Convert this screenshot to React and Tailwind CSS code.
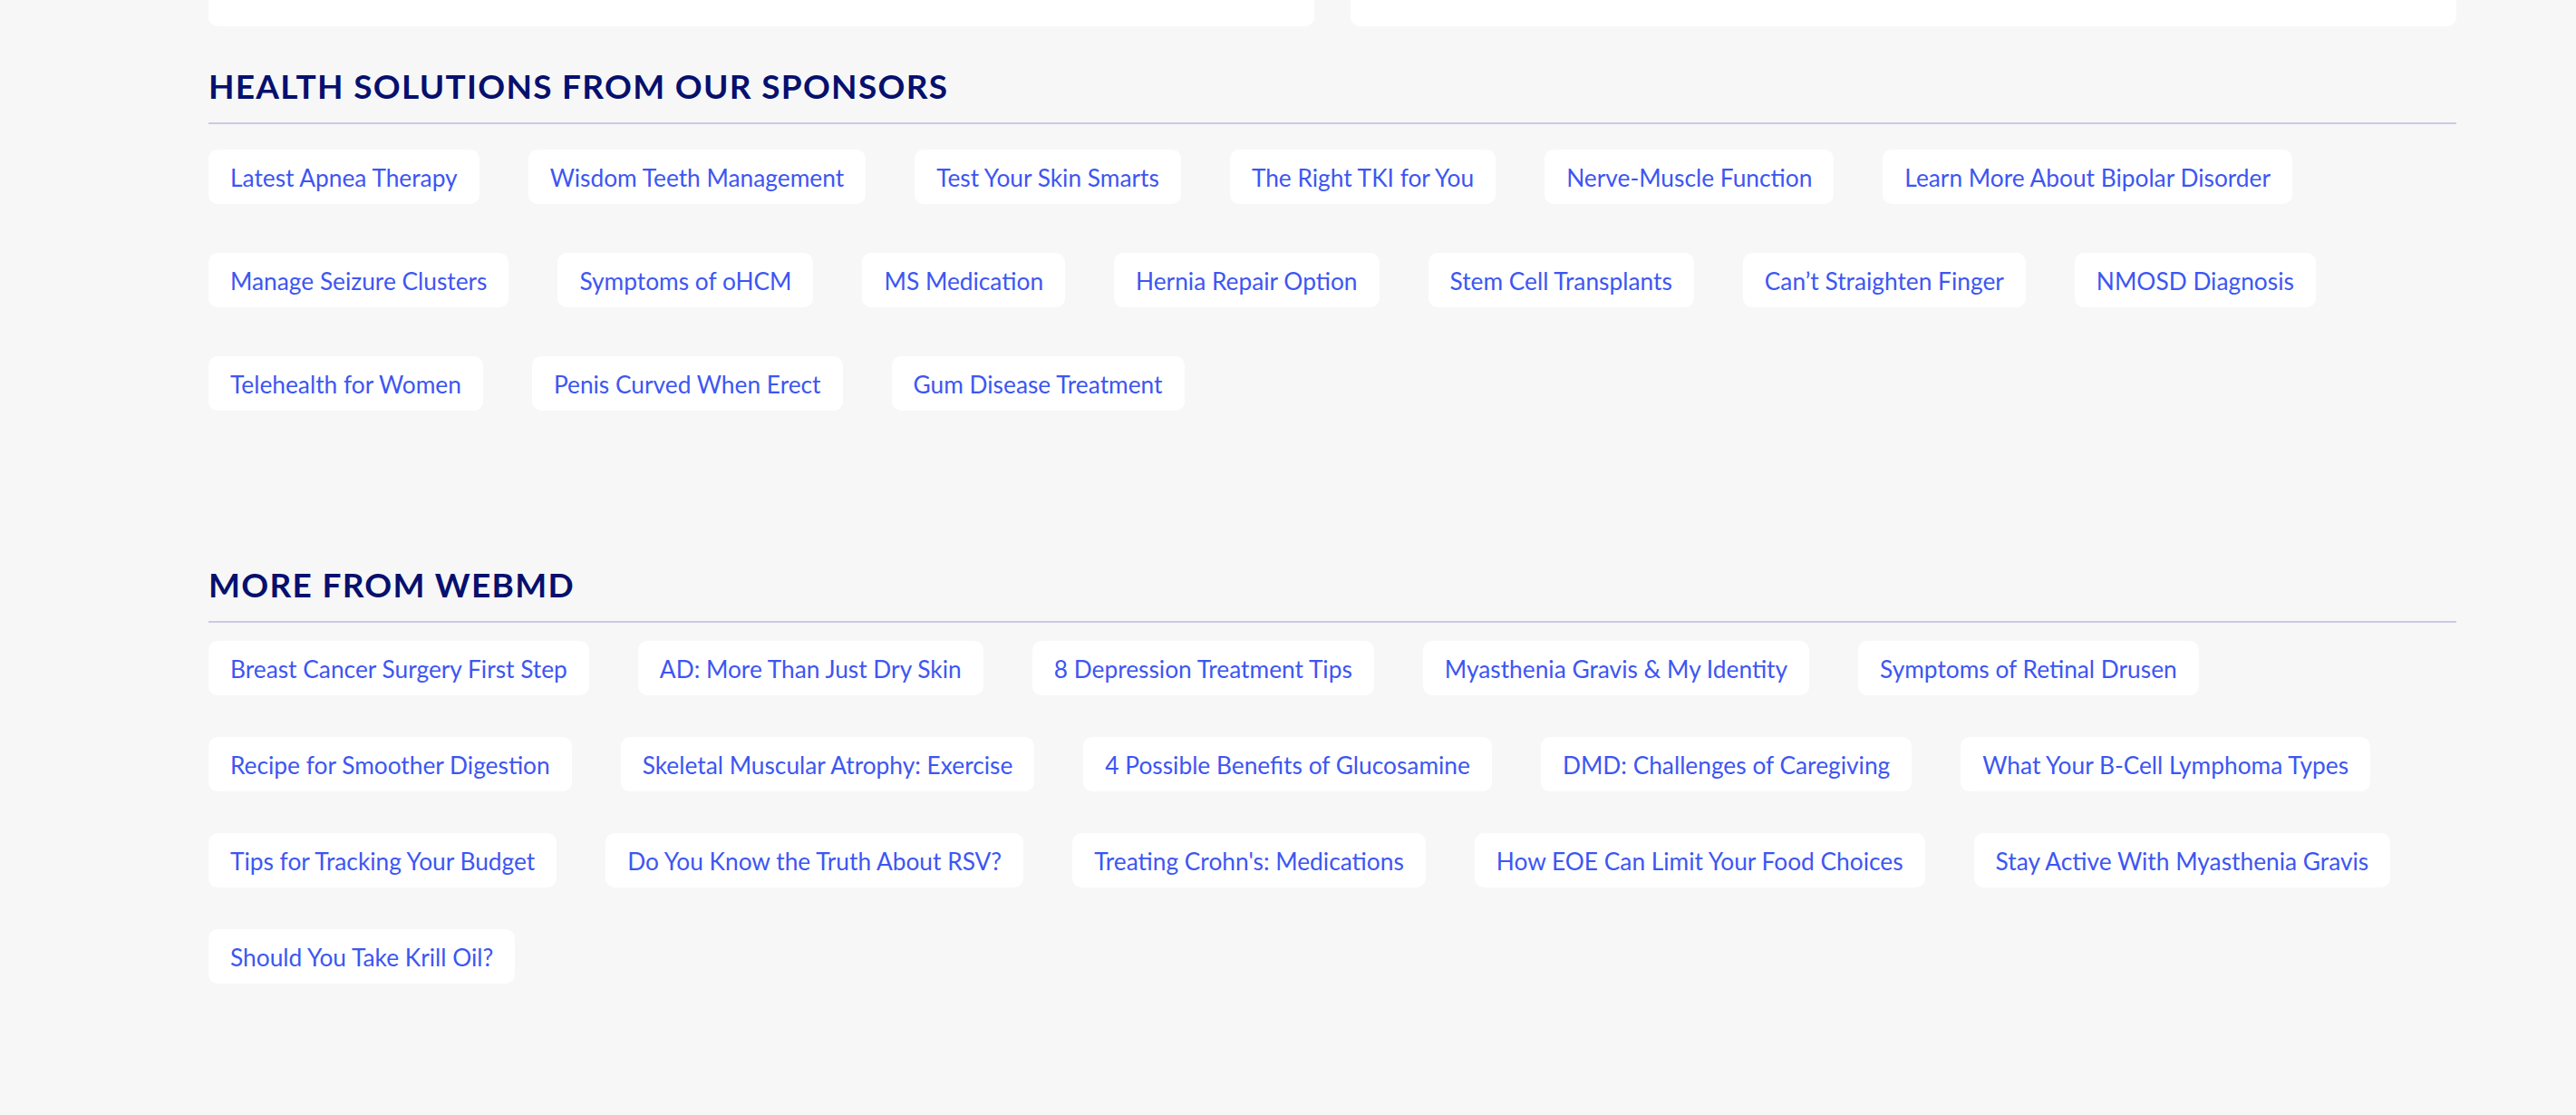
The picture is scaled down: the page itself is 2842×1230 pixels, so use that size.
const sponsors = [
  'Latest Apnea Therapy',
  'Wisdom Teeth Management',
  'Test Your Skin Smarts',
  'The Right TKI for You',
  'Nerve-Muscle Function',
  'Learn More About Bipolar Disorder',
  'Manage Seizure Clusters',
  'Symptoms of oHCM',
  'MS Medication',
  'Hernia Repair Option',
  'Stem Cell Transplants',
  'Can’t Straighten Finger',
  'NMOSD Diagnosis',
  'Telehealth for Women',
  'Penis Curved When Erect',
  'Gum Disease Treatment',
];

const moreLinks = [
  'Breast Cancer Surgery First Step',
  'AD: More Than Just Dry Skin',
  '8 Depression Treatment Tips',
  'Myasthenia Gravis & My Identity',
  'Symptoms of Retinal Drusen',
  'Recipe for Smoother Digestion',
  'Skeletal Muscular Atrophy: Exercise',
  '4 Possible Benefits of Glucosamine',
  'DMD: Challenges of Caregiving',
  'What Your B-Cell Lymphoma Types',
  'Tips for Tracking Your Budget',
  'Do You Know the Truth About RSV?',
  "Treating Crohn's: Medications",
  'How EOE Can Limit Your Food Choices',
  'Stay Active With Myasthenia Gravis',
  'Should You Take Krill Oil?',
];

function Pill({ label }) {
  return (
    <a href="#" className="flex h-[60px] items-center whitespace-nowrap rounded-[10px] bg-white px-[24px] pt-[3px] text-[26.3px] text-[#3d56f2]">
      {label}
    </a>
  );
}

function SectionTitle({ children }) {
  return (
    <div>
      <h2 className="text-[37px] font-bold uppercase leading-[48px] tracking-[0.035em] text-[#06106e]">{children}</h2>
      <div className="mt-[16px] h-[2px] bg-[#c9cae6]" />
    </div>
  );
}

export default function App() {
  return (
    <div className="min-h-[1230px] bg-[#f7f7f7] pl-[230px] font-['Lato','Open_Sans',sans-serif]">
      <div className="w-[2480px]">
        <div className="flex gap-[40px]">
          <div className="h-[29px] flex-1 rounded-b-[10px] bg-white" />
          <div className="h-[29px] flex-1 rounded-b-[10px] bg-white" />
        </div>

        <section className="mt-[42px]">
          <SectionTitle>Health Solutions From Our Sponsors</SectionTitle>
          <div className="mt-[28px] flex flex-wrap gap-x-[54px] gap-y-[54px]">
            {sponsors.map((item) => <Pill key={item} label={item} />)}
          </div>
        </section>

        <section className="mt-[168px]">
          <SectionTitle>More From WebMD</SectionTitle>
          <div className="mt-[20px] flex flex-wrap gap-x-[54px] gap-y-[46px]">
            {moreLinks.map((item) => <Pill key={item} label={item} />)}
          </div>
        </section>
      </div>
    </div>
  );
}
